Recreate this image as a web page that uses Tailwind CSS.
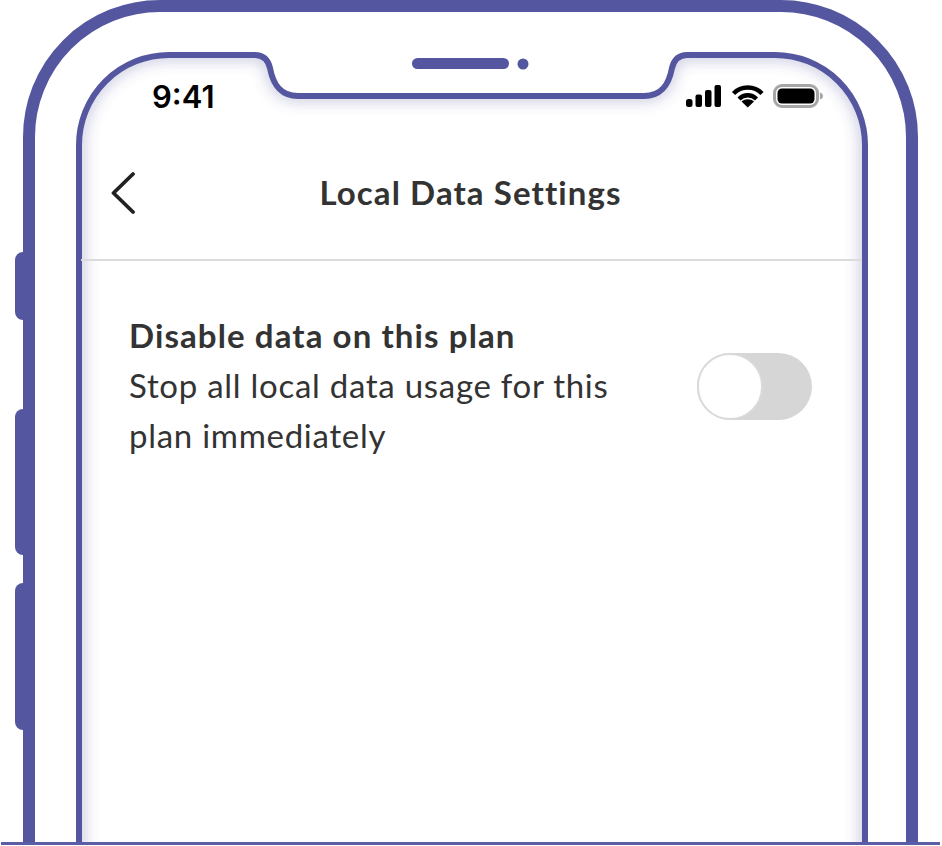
<!DOCTYPE html>
<html lang="en">
  <head>
    <meta charset="UTF-8" />
    <meta name="viewport" content="width=device-width, initial-scale=1.0" />
    <title>Local Data Settings</title>
    <script src="https://cdn.jsdelivr.net/npm/@tailwindcss/browser@4"></script>
  </head>

  <body class="bg-white overflow-hidden font-['Lato',sans-serif]">
    <div class="relative w-[942px] h-[846px] overflow-hidden bg-white">
      <!-- Phone frame -->
      <svg class="absolute inset-0" width="942" height="846" viewBox="0 0 942 846" fill="none">
        <defs>
          <clipPath id="screen">
            <path d="M79 842V145A90 90 0 0 1 169 55H255C264 55 268 60 270 68C273 84 280 96 298 96H644C662 96 669 84 672 68C674 60 678 55 687 55H775A90 90 0 0 1 865 145V842Z" />
          </clipPath>
          <filter id="soft" x="-10%" y="-10%" width="120%" height="120%">
            <feGaussianBlur stdDeviation="7" />
          </filter>
        </defs>
        <!-- inner shadow of the screen -->
        <g clip-path="url(#screen)">
          <path filter="url(#soft)" stroke="#54579f" stroke-opacity="0.3" stroke-width="12" d="M79 860V145A90 90 0 0 1 169 55H255C264 55 268 60 270 68C273 84 280 96 298 96H644C662 96 669 84 672 68C674 60 678 55 687 55H775A90 90 0 0 1 865 145V860" />
        </g>
        <!-- side buttons -->
        <path fill="#54579f" d="M25 252H23A8 8 0 0 0 15 260V312A8 8 0 0 0 23 320H25Z" />
        <path fill="#54579f" d="M25 409H23A8 8 0 0 0 15 417V547A8 8 0 0 0 23 555H25Z" />
        <path fill="#54579f" d="M25 583H23A8 8 0 0 0 15 591V722A8 8 0 0 0 23 730H25Z" />
        <!-- outer body -->
        <path stroke="#54579f" stroke-width="12" d="M29 843V137A131 131 0 0 1 160 6H781A131 131 0 0 1 912 137V843" />
        <!-- screen edge and notch -->
        <path stroke="#54579f" stroke-width="6" d="M79 843V145A90 90 0 0 1 169 55H255C264 55 268 60 270 68C273 84 280 96 298 96H644C662 96 669 84 672 68C674 60 678 55 687 55H775A90 90 0 0 1 865 145V843" />
        <!-- speaker and camera -->
        <rect x="412" y="58" width="97" height="11" rx="5.5" fill="#54579f" />
        <circle cx="523" cy="64" r="5.5" fill="#54579f" />
        <!-- base line -->
        <rect x="1" y="842" width="939" height="3" fill="#5b5ea5" />
      </svg>

      <!-- Screen content -->
      <main class="relative ml-[81px] w-[781px]">
        <!-- Status bar -->
        <div class="flex items-center justify-between h-[35px] mt-[79px] pl-[71px] pr-[37px]">
          <span class="font-['Inter',sans-serif] text-[31px] leading-[35px] font-semibold text-black">9:41</span>
          <svg width="139" height="25" viewBox="0 0 139 25" fill="none">
            <!-- signal -->
            <rect x="0" y="15" width="6.5" height="8" rx="2.5" fill="#000" />
            <rect x="9.5" y="10.5" width="6.5" height="12.5" rx="2" fill="#000" />
            <rect x="19" y="6" width="6.5" height="17" rx="2" fill="#000" />
            <rect x="28.5" y="1" width="6.5" height="22" rx="2" fill="#000" />
            <!-- wifi -->
            <path stroke="#000" stroke-width="4.4" d="M47.5 9.5C55 1.5 68.5 1.5 76 9.5" />
            <path stroke="#000" stroke-width="4.4" d="M53 15C58 10 65.5 10 70.5 15" />
            <path fill="#000" d="M55.5 17.5C59 14.5 64.5 14.5 68 17.5L61.75 23.5Z" />
            <!-- battery -->
            <rect x="88.5" y="1.5" width="43" height="21" rx="7.5" stroke="#a6a6a6" stroke-width="3" />
            <rect x="91.5" y="4.5" width="37" height="15" rx="4.5" fill="#000" />
            <path fill="#a6a6a6" d="M134 8.5C136 9 137 10.5 137 12C137 13.5 136 15 134 15.5Z" />
          </svg>
        </div>

        <!-- Header -->
        <header class="relative flex items-center justify-center h-[147px] border-b-2 border-[#dcdcdc]">
          <svg class="absolute left-[30px] top-[57px]" width="26" height="44" viewBox="0 0 26 44" fill="none">
            <path stroke="#222" stroke-width="3.8" stroke-linecap="round" stroke-linejoin="round" d="M22 3L2.5 22L22 41" />
          </svg>
          <h1 class="pt-[11px] pr-[2px] text-[33px] leading-10 font-bold tracking-[1.1px] text-[#333]">Local Data Settings</h1>
        </header>

        <!-- Setting row -->
        <section class="flex items-start justify-between pt-[49px] pl-[48px] pr-[50px]">
          <div class="w-[500px] text-[33px] leading-[50px] tracking-[0.72px] text-[#333]">
            <h2 class="font-bold tracking-[1.1px]">Disable data on this plan</h2>
            <p>Stop all local data usage for this plan immediately</p>
          </div>
          <div class="mt-[43px] w-[115px] h-[67px] rounded-full bg-[#d6d6d6]">
            <div class="w-[66px] h-[67px] rounded-full bg-white border-2 border-[#dadada]"></div>
          </div>
        </section>
      </main>
    </div>
  </body>
</html>
